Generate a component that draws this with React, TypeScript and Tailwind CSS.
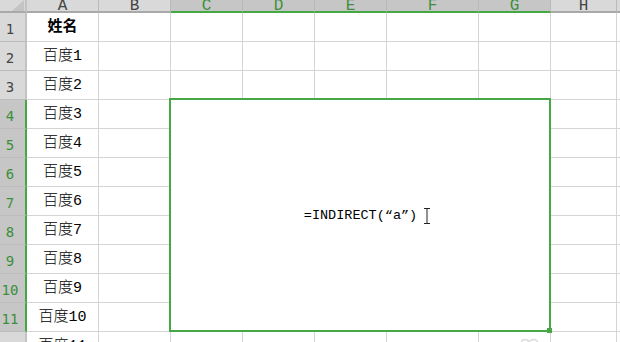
import React from "react";

const GREEN = "border-[#45a845]";
const cols = ["A", "B", "C", "D", "E", "F", "G", "H", ""];
const selCols = new Set(["C", "D", "E", "F", "G"]);

function rowText(r: number) {
  if (r === 1) return "姓名";
  return "百度" + (r - 1);
}

export default function App() {
  const cells: React.ReactNode[] = [];
  // header row
  cells.push(
    <div
      key="corner"
      className="relative bg-[#d9d9d9] border-r-2 border-b-2 border-r-[#c2c2c2] border-b-[#a9a9a9]"
    >
      <svg className="absolute left-[12px] top-0" width="13" height="11" viewBox="0 0 13 11">
        <polygon points="0,11 12,11 12,0" fill="#c4c4c4" />
      </svg>
    </div>
  );
  cols.forEach((c) => {
    const sel = selCols.has(c);
    cells.push(
      <div
        key={"h" + c}
        className={
          "flex justify-center overflow-hidden border-r border-b-2 border-r-[#b9b9b9] " +
          (sel ? "bg-[#c6c6c6] text-[#3a8f3a] border-b-[#45a845]" : "bg-[#d9d9d9] text-[#444] border-b-[#a9a9a9]")
        }
      >
        <span className="text-[16px] leading-[12px] font-['Liberation_Mono',monospace]">{c}</span>
      </div>
    );
  });

  for (let r = 1; r <= 12; r++) {
    const sel = r >= 4 && r <= 11;
    cells.push(
      <div
        key={"r" + r}
        className={
          "flex items-center border-b border-r-2 border-b-[#bcbcbc] " +
          (sel ? "bg-[#c6c6c6] text-[#3a8f3a] " + GREEN : "bg-[#d9d9d9] text-[#444] border-r-[#c2c2c2]")
        }
      >
        <span className="w-[20px] text-center text-[14px] leading-none font-['DejaVu_Sans_Mono',monospace] font-light pt-[3px]">
          {r}
        </span>
      </div>
    );
    cells.push(
      <div
        key={"a" + r}
        className={
          "flex items-center justify-center bg-white border-r border-b border-[#d4d4d4] text-black text-[15px] pt-[3px] font-['Liberation_Mono','Noto_Sans_CJK_SC',sans-serif] " +
          (r === 1 ? "font-bold" : "font-light")
        }
      >
        {rowText(r)}
      </div>
    );
    cells.push(<div key={"b" + r} className="bg-white border-r border-b border-[#d4d4d4]" />);
    if (r === 4) {
      cells.push(
        <div
          key="merged"
          className="relative col-start-4 col-span-5 row-start-5 row-span-8 bg-white border-r border-b border-[#d4d4d4] flex items-center justify-center"
        >
          <span className="text-[13.5px] text-black font-['Liberation_Mono',monospace] pt-[1px]">
            =INDIRECT(“a”)
          </span>
          <svg className="absolute left-[252px] top-[107px]" width="8" height="18" viewBox="0 0 8 18">
            <path d="M1 1.5H7M4 1.5V16.5M1 16.5H7" stroke="#222" strokeWidth="1" fill="none" />
          </svg>
          <div className="absolute z-10 left-[-2px] top-[-2px] right-[-1px] bottom-[-1px] border-2 border-[#45a845] pointer-events-none" />
          <div className="absolute z-20 right-[-2px] bottom-[-2px] w-[5px] h-[5px] bg-[#45a845]" />
        </div>
      );
    } else if (!sel) {
      ["C", "D", "E", "F", "G"].forEach((c) =>
        cells.push(<div key={c + r} className="bg-white border-r border-b border-[#d4d4d4]" />)
      );
    }
    cells.push(<div key={"hh" + r} className="bg-white border-r border-b border-[#d4d4d4]" />);
    cells.push(<div key={"ii" + r} className="bg-white border-r border-b border-[#d4d4d4]" />);
  }

  return (
    <div className="relative w-[620px] h-[342px] overflow-hidden bg-white">
      <div className="grid grid-cols-[27px_72px_72px_72px_72px_72px_92px_72px_66px_80px] grid-rows-[13px_repeat(12,29px)] w-max">
        {cells}
      </div>
      <svg className="absolute left-[519px] top-[336px]" width="22" height="8" viewBox="0 0 22 8">
        <path d="M2 8C2 2 10 2 10 8M10 8C10 2 19 2 19 8" stroke="#dcdcdc" strokeWidth="1.5" fill="none" />
      </svg>
    </div>
  );
}
